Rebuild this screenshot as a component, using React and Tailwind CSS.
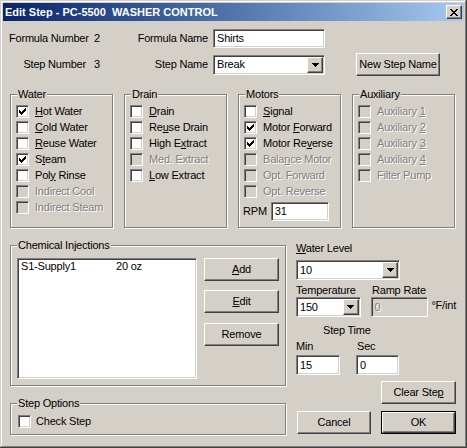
import React from "react";

const raised =
  "bg-[#d4d0c8] border border-t-white border-l-white border-r-[#404040] border-b-[#404040] shadow-[inset_-1px_-1px_0_#808080]";
const sunken =
  "border border-t-[#808080] border-l-[#808080] border-r-white border-b-white shadow-[inset_1px_1px_0_#404040,inset_-1px_-1px_0_#d4d0c8]";
const groupBox = "border border-[#808080] shadow-[inset_1px_1px_0_#fff,1px_1px_0_#fff]";
const dim = "text-[#808080] [text-shadow:1px_1px_0_#fff]";

// "&" marks the mnemonic letter
function Mn({ t }) {
  const i = t.indexOf("&");
  if (i < 0) return t;
  return (
    <>
      {t.slice(0, i)}
      <span className="underline underline-offset-[1px]">{t[i + 1]}</span>
      {t.slice(i + 2)}
    </>
  );
}

function CheckBox({ checked, disabled }) {
  return (
    <span
      className={`w-[13px] h-[13px] shrink-0 flex items-center justify-center ${sunken} ${
        disabled ? "bg-[#d4d0c8]" : "bg-white"
      }`}
    >
      {checked && (
        <svg width="7" height="7" viewBox="0 0 7 7" shapeRendering="crispEdges">
          <polygon points="0,2 2,4 7,-1 7,2 2,7 0,5" fill="#000" />
        </svg>
      )}
    </span>
  );
}

function CheckRow({ label, checked, disabled }) {
  return (
    <div className="flex items-center h-[16px] gap-[6px]">
      <CheckBox checked={checked} disabled={disabled} />
      <span className={`whitespace-nowrap ${disabled ? dim : ""}`}>
        <Mn t={label} />
      </span>
    </div>
  );
}

function Group({ title, className = "", children }) {
  return (
    <div className={`${groupBox} ${className}`}>
      <div className="w-fit -mt-[7px] ml-[6px] px-[1px] bg-[#d4d0c8] leading-[13px] whitespace-nowrap">{title}</div>
      {children}
    </div>
  );
}

function Arrow() {
  return (
    <svg width="7" height="4" viewBox="0 0 7 4" shapeRendering="crispEdges">
      <polygon points="0,0 7,0 3.5,4" fill="#000" />
    </svg>
  );
}

function Combo({ value, className = "" }) {
  return (
    <div className={`bg-white p-[1px] flex ${sunken} ${className}`}>
      <div className="flex-1 flex items-center pl-[2px]">{value}</div>
      <div className={`w-[16px] h-full flex items-center justify-center ${raised}`}>
        <Arrow />
      </div>
    </div>
  );
}

function Field({ value, className = "", disabled }) {
  return (
    <div
      className={`flex items-center pl-[3px] ${sunken} ${
        disabled ? "bg-[#d4d0c8] " + dim : "bg-white"
      } ${className}`}
    >
      {value}
    </div>
  );
}

function Button({ label, className = "" }) {
  return (
    <div className={`flex items-center justify-center whitespace-nowrap ${raised} ${className}`}>
      <Mn t={label} />
    </div>
  );
}

const water = [
  ["&Hot Water", true],
  ["&Cold Water"],
  ["&Reuse Water"],
  ["S&team", true],
  ["Pol&y Rinse"],
  ["Indirect Cool", false, true],
  ["Indirect Steam", false, true],
];
const drain = [
  ["&Drain"],
  ["Re&use Drain"],
  ["High E&xtract"],
  ["Med. Extract", false, true],
  ["&Low Extract"],
];
const motors = [
  ["&Signal"],
  ["Motor &Forward", true],
  ["Motor Re&verse", true],
  ["Bala&nce Motor", false, true],
  ["Opt. Forward", false, true],
  ["Opt. Reverse", false, true],
];
const aux = [
  ["Auxiliary &1", false, true],
  ["Auxiliary &2", false, true],
  ["Auxiliary &3", false, true],
  ["Auxiliary &4", false, true],
  ["Filter Pump", false, true],
];

function Rows({ items }) {
  return (
    <div className="mt-[2px] pl-[5px]">
      {items.map(([l, c, d]) => (
        <CheckRow key={l} label={l} checked={c} disabled={d} />
      ))}
    </div>
  );
}

export default function App() {
  return (
    <div className="w-[467px] h-[448px] bg-[#d4d0c8] p-[3px] text-black text-[11px] leading-[13px] tracking-[-0.2px] font-['Liberation_Sans',Arial,sans-serif] shadow-[inset_-1px_-1px_0_#404040,inset_1px_1px_0_#d4d0c8,inset_-2px_-2px_0_#808080,inset_2px_2px_0_#fff]">
      {/* title bar */}
      <div className="h-[18px] flex items-center justify-between pl-[2px] pr-[2px] bg-linear-to-r from-[#0a246a] to-[#a6caf0]">
        <span className="text-white font-bold text-[11px] tracking-normal whitespace-pre">Edit Step - PC-5500  WASHER CONTROL</span>
        <div className={`w-[16px] h-[14px] flex items-center justify-center ${raised}`}>
          <svg width="8" height="7" viewBox="0 0 8 7" shapeRendering="crispEdges">
            <path d="M0 0h2l2 2.3L6 0h2L5 3.5 8 7H6L4 4.7 2 7H0l3-3.5z" fill="#000" />
          </svg>
        </div>
      </div>

      <div className="pl-[7px] pt-[8px] whitespace-nowrap">
        <div className="flex items-center h-[19px]">
          <div className="w-[77px] -ml-[1px] text-right">Formula Number</div>
          <div className="w-[27px] pl-[8px]">2</div>
          <div className="w-[95px] text-right">Formula Name</div>
          <Field value="Shirts" className="ml-[5px] w-[112px] h-[19px]" />
        </div>
        <div className="mt-[5px] flex items-center h-[23px]">
          <div className="w-[77px] -ml-[1px] text-right">Step Number</div>
          <div className="w-[27px] pl-[8px]">3</div>
          <div className="w-[95px] text-right">Step Name</div>
          <Combo value="Break" className="ml-[5px] w-[112px] h-[20px]" />
          <Button label="New Step Name" className="ml-[31px] w-[84px] h-[23px]" />
        </div>

        <div className="mt-[18px] flex gap-[11px]">
          <Group title="Water" className="w-[103px] h-[134px]">
            <Rows items={water} />
          </Group>
          <Group title="Drain" className="w-[103px] h-[134px]">
            <Rows items={drain} />
          </Group>
          <Group title="Motors" className="w-[103px] h-[134px]">
            <Rows items={motors} />
            <div className="mt-[3px] pl-[4px] flex items-center">
              <span>RPM</span>
              <Field value="31" className="ml-[4px] w-[58px] h-[19px]" />
            </div>
          </Group>
          <Group title="Auxiliary" className="w-[103px] h-[134px]">
            <Rows items={aux} />
          </Group>
        </div>

        <div className="flex">
          <div className="w-[276px]">
            <Group title="Chemical Injections" className="mt-[17px] h-[141px]">
              <div className="mt-[6px] pl-[6px] flex">
                <div className={`w-[180px] h-[121px] bg-white pt-[1px] pl-[3px] ${sunken}`}>
                  <div className="flex">
                    <span className="w-[95px]">S1-Supply1</span>
                    <span>20 oz</span>
                  </div>
                </div>
                <div className="ml-[7px] flex flex-col">
                  <Button label="&Add" className="w-[75px] h-[23px]" />
                  <Button label="&Edit" className="mt-[9px] w-[75px] h-[23px]" />
                  <Button label="Remove" className="mt-[10px] w-[75px] h-[23px]" />
                </div>
              </div>
            </Group>
            <Group title="Step Options" className="mt-[17px] h-[32px]">
              <div className="mt-[3px] pl-[7px] flex items-center h-[16px] gap-[5px]">
                <CheckBox />
                <span>Check Step</span>
              </div>
            </Group>
          </div>

          <div className="ml-[10px] w-[160px] pt-[14px]">
            <div>
              <Mn t="&Water Level" />
            </div>
            <Combo value="10" className="mt-[5px] w-[104px] h-[20px]" />
            <div className="mt-[4px] flex">
              <div className="w-[76px]">Temperature</div>
              <div>Ramp Rate</div>
            </div>
            <div className="flex items-center">
              <Combo value="150" className="w-[66px] h-[20px]" />
              <Field value="0" disabled className="ml-[10px] w-[59px] h-[20px]" />
              <span className="ml-[3px] -mt-[3px]">°F/int</span>
            </div>
            <div className="mt-[7px] pl-[27px]">Step Time</div>
            <div className="mt-[3px] flex">
              <div className="w-[61px]">Min</div>
              <div>Sec</div>
            </div>
            <div className="mt-[2px] flex">
              <Field value="15" className="w-[44px] h-[20px]" />
              <Field value="0" className="ml-[16px] w-[43px] h-[20px]" />
            </div>
            <Button label="Clear Ste&p" className="mt-[6px] ml-[85px] w-[75px] h-[23px]" />
            <div className="mt-[7px] flex">
              <Button label="Cancel" className="ml-[1px] w-[74px] h-[23px]" />
              <div className="ml-[10px] w-[75px] h-[23px] border border-black flex">
                <Button label="OK" className="flex-1" />
              </div>
            </div>
          </div>
        </div>
      </div>
    </div>
  );
}
